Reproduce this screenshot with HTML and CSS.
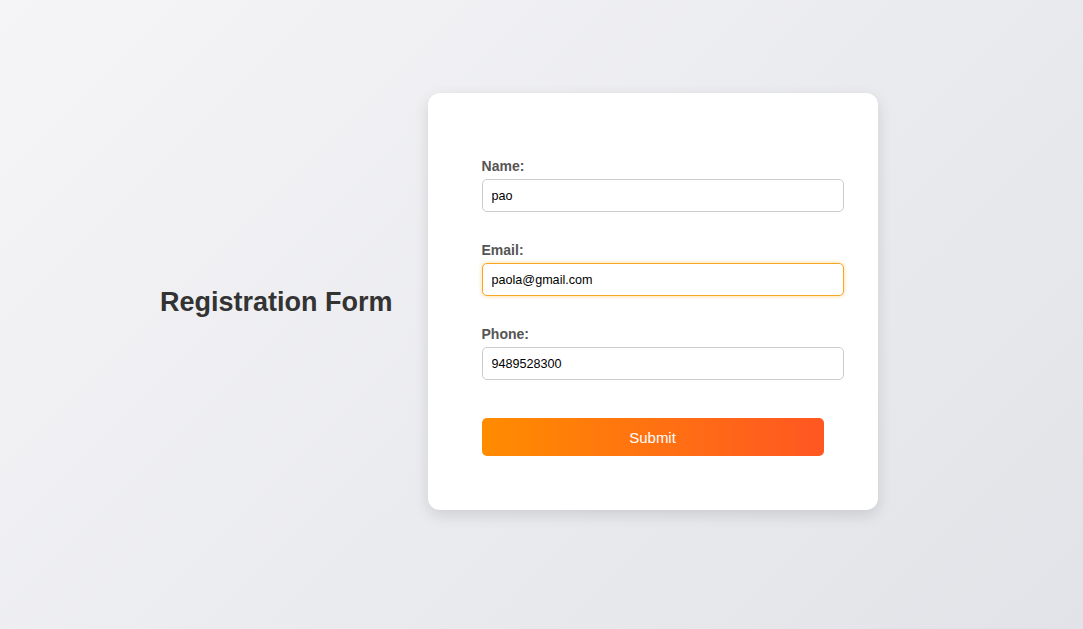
FILE: index.html
```html
<!DOCTYPE html>
<html lang="en">
<head>
<meta charset="utf-8">
<title>Registration Form</title>
<link rel="stylesheet" href="styles.css">
</head>
<body>
<div class="page">
  <h2 class="title">Registration Form</h2>
  <form class="card">
    <div class="group">
      <label class="label" for="name">Name:</label>
      <input class="field" id="name" type="text" value="pao">
    </div>
    <div class="group">
      <label class="label" for="email">Email:</label>
      <input class="field field-active" id="email" type="email" value="paola@gmail.com">
    </div>
    <div class="group">
      <label class="label" for="phone">Phone:</label>
      <input class="field" id="phone" type="text" value="9489528300">
    </div>
    <button class="submit" type="button">Submit</button>
  </form>
</div>
<script src="script.js"></script>
</body>
</html>
```

FILE: styles.css
```css
html, body {
  margin: 0;
  padding: 0;
}
body {
  min-height: 629px;
  background: linear-gradient(135deg, #f5f5f7 0%, #e2e3e8 100%);
  font-family: "Liberation Sans", Arial, sans-serif;
}
.page {
  display: flex;
  align-items: center;
  gap: 35px;
  padding: 93px 0 0 160px;
}
.title {
  margin: 0;
  font-size: 27px;
  font-weight: bold;
  color: #333;
  line-height: 32px;
}
.card {
  width: 450px;
  box-sizing: border-box;
  margin: 0;
  padding: 65px 54px 54px;
  background: #fff;
  border-radius: 12px;
  box-shadow: 0 5px 15px rgba(0, 0, 0, 0.12);
}
.group {
  margin-bottom: 30px;
}
.label {
  display: block;
  font-size: 14px;
  line-height: 16px;
  font-weight: bold;
  color: #555;
  margin-bottom: 5px;
}
.field {
  display: block;
  width: 362px;
  height: 33px;
  box-sizing: border-box;
  padding: 0 9px;
  border: 1px solid #ccc;
  border-radius: 5px;
  font-family: "Liberation Sans", Arial, sans-serif;
  font-size: 12.6px;
  color: #000;
  background: #fff;
  outline: none;
  caret-color: #000;
}
.field-active,
.field:focus {
  border-color: #f5a623;
  box-shadow: 0 0 4px rgba(255, 165, 0, 0.45);
}
.submit {
  display: block;
  width: 342px;
  height: 38px;
  margin-top: 38px;
  border: none;
  border-radius: 5px;
  background: linear-gradient(90deg, #ff8c00 0%, #ff5722 100%);
  color: #fff;
  font-family: "Liberation Sans", Arial, sans-serif;
  font-size: 15px;
  cursor: pointer;
}
```

FILE: script.js
```js
var el = document.getElementById('email');
el.focus();
var n = el.value.length;
try { el.type = 'text'; el.setSelectionRange(n, n); } catch (e) {}
```
